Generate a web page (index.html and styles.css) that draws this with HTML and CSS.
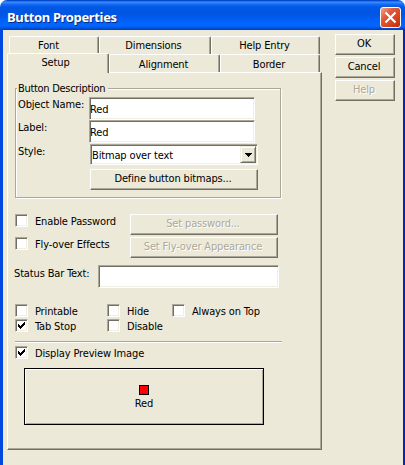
FILE: index.html
```html
<!DOCTYPE html>
<html lang="en">
<head>
<meta charset="utf-8">
<title>Button Properties</title>
<link rel="stylesheet" href="styles.css">
</head>
<body>
<div class="window">
  <header class="titlebar">
    <span class="caption">Button Properties</span>
    <button class="close" aria-label="Close"><svg width="13" height="13" viewBox="0 0 13 13"><path d="M1.5 1.5L11.5 11.5M11.5 1.5L1.5 11.5" stroke="#fff" stroke-width="2.1"/></svg></button>
  </header>
  <main class="client">
    <section class="sheet">
      <nav class="tabs back">
        <div class="tab font">Font</div>
        <div class="tab dimensions">Dimensions</div>
        <div class="tab help-entry">Help Entry</div>
      </nav>
      <nav class="tabs front">
        <div class="tab setup">Setup</div>
        <div class="tab alignment">Alignment</div>
        <div class="tab border-tab">Border</div>
      </nav>
      <div class="panel">
        <div class="group">
          <span class="legend">Button Description</span>
          <div class="row"><span class="label name">Object Name:</span><div class="field">Red</div></div>
          <div class="row"><span class="label">Label:</span><div class="field">Red</div></div>
          <div class="row style-row"><span class="label">Style:</span>
            <div class="select"><span class="value">Bitmap over text</span><span class="arrow"><svg width="7" height="4" viewBox="0 0 7 4" shape-rendering="crispEdges"><path d="M0 0H7V1H6V2H5V3H4V4H3V3H2V2H1V1H0Z"/></svg></span></div>
          </div>
          <button class="btn define"><span>Define button bitmaps...</span></button>
        </div>
        <div class="option password">
          <i class="box"></i><span class="text">Enable Password</span>
          <button class="btn disabled wide"><span>Set password...</span></button>
        </div>
        <div class="option flyover">
          <i class="box"></i><span class="text">Fly-over Effects</span>
          <button class="btn disabled wide"><span class="appearance">Set Fly-over Appearance</span></button>
        </div>
        <div class="status"><span class="status-label">Status Bar Text:</span><div class="field"></div></div>
        <div class="checks">
          <div class="check"><i class="box"></i><span>Printable</span></div>
          <div class="check"><i class="box"></i><span>Hide</span></div>
          <div class="check"><i class="box"></i><span>Always on Top</span></div>
          <div class="check"><i class="box"><svg width="7" height="7" viewBox="0 0 7 7" shape-rendering="crispEdges"><path d="M0 2h1v1h1v1h1v-1h1v-1h1v-1h1v-1h1v3h-1v1h-1v1h-1v1h-1v1h-1v-1h-1v-1h-1z"/></svg></i><span>Tab Stop</span></div>
          <div class="check"><i class="box"></i><span>Disable</span></div>
        </div>
        <div class="rule"></div>
        <div class="check preview-check"><i class="box"><svg width="7" height="7" viewBox="0 0 7 7" shape-rendering="crispEdges"><path d="M0 2h1v1h1v1h1v-1h1v-1h1v-1h1v-1h1v3h-1v1h-1v1h-1v1h-1v1h-1v-1h-1v-1h-1z"/></svg></i><span>Display Preview Image</span></div>
        <div class="preview"><i class="swatch"></i><span>Red</span></div>
      </div>
    </section>
    <aside class="actions">
      <button class="btn"><span>OK</span></button>
      <button class="btn"><span>Cancel</span></button>
      <button class="btn disabled"><span>Help</span></button>
    </aside>
  </main>
</div>
</body>
</html>
```
FILE: styles.css
```css
* { box-sizing: border-box; }
body {
  margin: 0;
  width: 405px;
  height: 465px;
  overflow: hidden;
  background: #fff;
  color: #000;
  font: 11px/14px "DejaVu Sans Condensed", "DejaVu Sans", sans-serif;
  font-stretch: condensed;
  letter-spacing: -0.15px;
  white-space: nowrap;
}
.window {
  height: 465px;
  display: flex;
  flex-direction: column;
  overflow: hidden;
  border-radius: 7px 7px 0 0;
}
.titlebar {
  height: 30px;
  flex: none;
  display: flex;
  align-items: center;
  justify-content: space-between;
  padding: 5px 4px 0 7px;
  background: linear-gradient(#0044c8 0, #0a4fd8 1px, #3d95ff 2px, #1a6cf5 4px, #0058e6 7px, #0055e3 14px, #0060fa 21px, #0068ff 26px, #0054dc 28px, #003cc0 30px);
}
.caption {
  margin-top: -2px;
  font: bold 13px/18px "Noto Sans", sans-serif;
  letter-spacing: -0.35px;
  color: #fff;
  text-shadow: 1px 1px #0a2a88;
}
.close {
  width: 21px;
  height: 21px;
  padding: 0;
  display: flex;
  align-items: center;
  justify-content: center;
  border: 1px solid #fff;
  border-radius: 3px;
  background: linear-gradient(135deg, #f0a58c, #e2593a 35%, #d8421c 70%, #b83010);
}
.client {
  flex: 1;
  display: flex;
  gap: 13px;
  padding: 4px 0 0 4px;
  border-left: 3px solid #0148e0;
  border-right: 2px solid #0028b8;
  background: #ece9d8;
}
.sheet { width: 315px; padding-top: 2px; }
.tabs { display: flex; }
.tab {
  padding-right: 2px;
  text-align: center;
  border-top: 1px solid #fff;
  border-left: 1px solid #fff;
  border-right: 1px solid #716f64;
  border-radius: 2px 2px 0 0;
  box-shadow: inset -1px 0 #aca899;
}
.back { padding-left: 2px; height: 17px; }
.back .tab { height: 18px; line-height: 18px; }
.font { width: 90px; padding-right: 11px; }
.dimensions { width: 112px; padding-right: 3px; }
.help-entry { width: 109px; }
.front { height: 19px; align-items: flex-end; position: relative; }
.front .tab { height: 18px; line-height: 20px; }
.front .setup { width: 102px; height: 20px; margin-bottom: -1px; padding-right: 5px; line-height: 18px; background: #ece9d8; z-index: 1; }
.alignment { width: 111px; }
.border-tab { width: 100px; }
.panel {
  height: 378px;
  padding: 15px 0 0 7px;
  border: 1px solid #fff;
  border-right-color: #716f64;
  border-bottom-color: #716f64;
  box-shadow: inset -1px -1px #aca899;
}
.group {
  width: 266px;
  height: 110px;
  padding: 0 0 0 2px;
  border: 1px solid #aca899;
  box-shadow: 1px 1px #fff, inset 1px 1px #fff;
}
.legend {
  display: block;
  width: 91px;
  height: 14px;
  margin: -7px 0 1px -1px;
  padding-left: 1px;
  letter-spacing: -0.3px;
  background: #ece9d8;
}
.row { display: flex; height: 23px; }
.label { width: 71px; line-height: 16px; }
.field {
  width: 166px;
  height: 23px;
  padding-left: 1px;
  line-height: 23px;
  background: #fff;
  border: 1px solid #aca899;
  border-right-color: #fff;
  border-bottom-color: #fff;
  box-shadow: inset 1px 1px #716f64, inset -1px -1px #f1efe2;
}
.row .field { padding-left: 0; }
.style-row { height: 26px; }
.style-row .label { line-height: 18px; }
.select {
  width: 168px;
  height: 21px;
  margin: 1px 0 0 1px;
  padding: 2px 2px 2px 1px;
  display: flex;
  justify-content: space-between;
  background: #fff;
  border: 1px solid #aca899;
  border-right-color: #fff;
  border-bottom-color: #fff;
  box-shadow: inset 1px 1px #716f64, inset -1px -1px #f1efe2;
}
.value { line-height: 17px; }
.arrow {
  width: 16px;
  height: 17px;
  margin: -1px -1px 0 0;
  display: flex;
  align-items: center;
  justify-content: center;
  background: #ece9d8;
  border: 1px solid #f1efe2;
  border-right-color: #716f64;
  border-bottom-color: #716f64;
  box-shadow: inset 1px 1px #fff, inset -1px -1px #aca899;
}
.btn {
  height: 21px;
  padding: 0 2px 2px 0;
  color: inherit;
  font: inherit;
  letter-spacing: inherit;
  background: #ece9d8;
  border: 1px solid #fff;
  border-right-color: #716f64;
  border-bottom-color: #716f64;
  box-shadow: inset -1px -1px #aca899;
}
.define { display: block; width: 168px; margin-left: 72px; }
.disabled { color: #aca899; text-shadow: 1px 1px #fff; }
.option { display: flex; align-items: flex-start; height: 23px; }
.password { margin-top: 16px; }
.text { width: 95px; line-height: 15px; }
.wide { width: 148px; }
.box {
  width: 13px;
  height: 13px;
  flex: none;
  margin-right: 7px;
  padding: 2px;
  display: block;
  background: #fff;
  border: 1px solid #aca899;
  border-right-color: #fff;
  border-bottom-color: #fff;
  box-shadow: inset 1px 1px #716f64, inset -1px -1px #f1efe2;
}
.box svg { display: block; }
.status { display: flex; margin-top: 5px; }
.status-label { width: 83px; margin-left: -1px; line-height: 17px; }
.status .field { width: 181px; margin-left: 1px; }
.checks {
  display: grid;
  grid-template-columns: 92px 65px 110px;
  grid-auto-rows: 15px;
  margin-top: 16px;
}
.check { display: flex; line-height: 15px; }
.rule { width: 267px; height: 2px; margin-top: 7px; background: linear-gradient(#aca899 50%, #fff 50%); }
.preview-check { margin-top: 3px; }
.preview {
  width: 240px;
  height: 57px;
  margin: 7px 0 0 9px;
  padding-top: 16px;
  display: flex;
  flex-direction: column;
  align-items: center;
  border: 1px solid #000;
  box-shadow: inset 1px 1px #fff, inset -1px -1px #aca899;
}
.swatch { width: 10px; height: 10px; margin-bottom: 2px; background: #f00; border: 1px solid #000; }
.actions { display: flex; flex-direction: column; gap: 2px; width: 60px; }
```
